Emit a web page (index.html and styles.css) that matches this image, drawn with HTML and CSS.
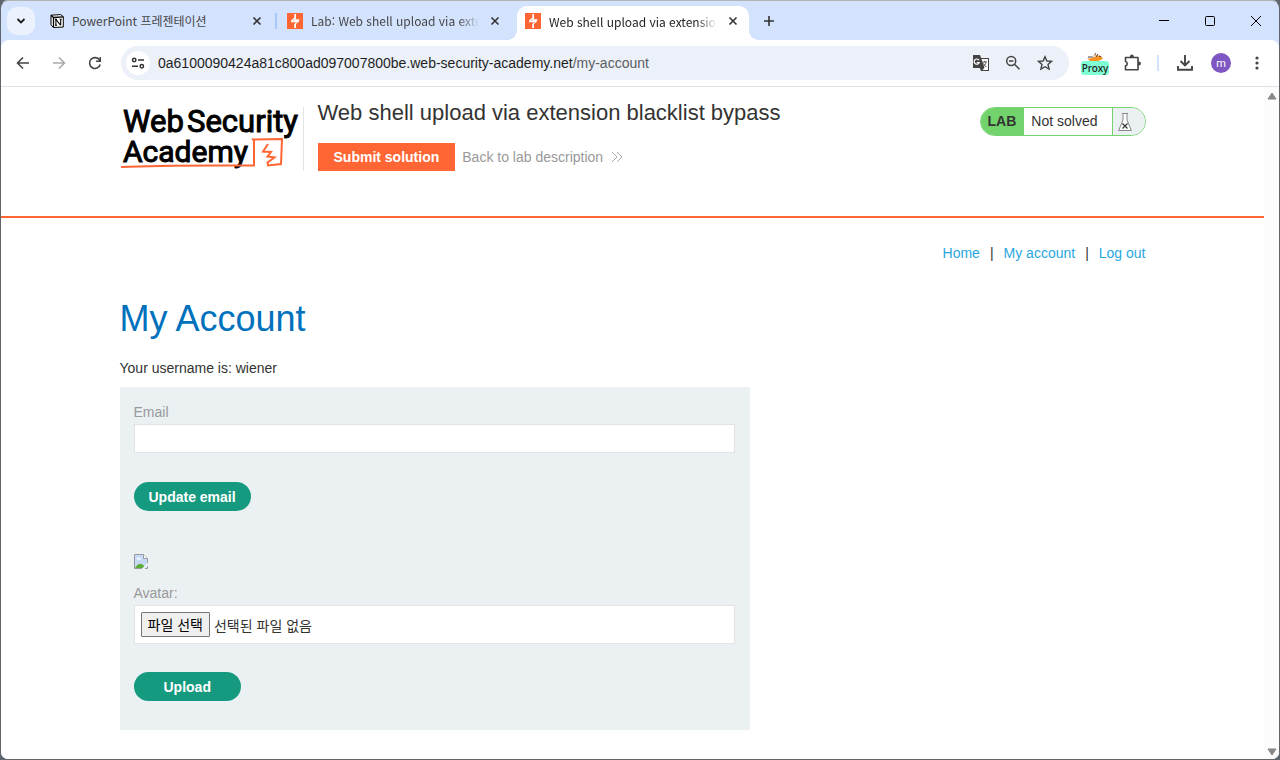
FILE: index.html
```html
<!DOCTYPE html>
<html lang="ko">
<head>
    <meta charset="UTF-8">
    <meta name="viewport" content="width=device-width, initial-scale=1.0">
    <title>Web shell upload via extension blacklist bypass</title>
    <link rel="stylesheet" href="styles.css">
</head>
<body>
    <svg width="0" height="0" class="defs" aria-hidden="true">
        <symbol id="burp" viewBox="0 0 16 16">
            <path fill="#ff6633" d="M0 0h16v16H0z"/>
            <path fill="#fff" d="M9 1v5.200h3.500L11.500 9 9 11v4H7.200v-3.800L9 9.200H3.800L4.500 7 7.300 4.500V1z"/>
            <path fill="#ff6633" d="M6.500 6.500h1.500L6.500 8zM9 9.300h1L9 10.300z"/>
        </symbol>
        <symbol id="close" viewBox="0 0 10 10">
            <path d="M1.500 1.500l7 7M8.500 1.500l-7 7" fill="none" stroke="currentColor" stroke-width="1.600"/>
        </symbol>
    </svg>

    <div class="window">
        <!-- Tabs -->
        <div class="tab-strip">
            <button class="tab-search" aria-label="Search tabs">
                <svg width="10" height="10" viewBox="0 0 10 10"><path d="M1.500 3 5 6.500 8.500 3" fill="none" stroke="#1f1f1f" stroke-width="1.800"/></svg>
            </button>
            <div class="tab first">
                <svg width="14" height="14" viewBox="0 0 14 14">
                    <path d="M1 1.200 10.500.600 13.300 2.600V13L3.500 13.500 1 10.800z" fill="#fff" stroke="#000"/>
                    <path d="M1 1.200 3.500 3.500 13.300 2.900M3.500 3.500v10" fill="none" stroke="#000" stroke-width="1.300"/>
                    <path d="M5 5.400h2M5.900 5.400v6M5 11.300h2M6 5.500l4.500 5.700M10.700 5.300v6M9.700 5.200h2" fill="none" stroke="#000" stroke-width="1.100"/>
                </svg>
                <span class="tab-title">PowerPoint 프레젠테이션</span>
                <button class="tab-close" aria-label="Close tab"><svg width="10" height="10"><use href="#close"/></svg></button>
            </div>
            <div class="tab-divider"></div>
            <div class="tab second">
                <svg width="16" height="16"><use href="#burp"/></svg>
                <span class="tab-title fade">Lab: Web shell upload via extension</span>
                <button class="tab-close" aria-label="Close tab"><svg width="10" height="10"><use href="#close"/></svg></button>
            </div>
            <div class="tab active">
                <svg width="16" height="16"><use href="#burp"/></svg>
                <span class="tab-title fade">Web shell upload via extension</span>
                <button class="tab-close" aria-label="Close tab"><svg width="10" height="10"><use href="#close"/></svg></button>
            </div>
            <button class="new-tab" aria-label="New tab">
                <svg width="12" height="12" viewBox="0 0 12 12"><path d="M6 1v10M1 6h10" stroke="#333" stroke-width="1.600"/></svg>
            </button>
            <div class="window-controls">
                <button aria-label="Minimize"><svg width="12" height="12" viewBox="0 0 12 12"><path d="M1 5.500h10" stroke="#000"/></svg></button>
                <button aria-label="Maximize"><svg width="12" height="12" viewBox="0 0 12 12"><rect x="1.500" y="1.500" width="9" height="9" rx="1" fill="none" stroke="#000"/></svg></button>
                <button aria-label="Close"><svg width="12" height="12" viewBox="0 0 12 12"><path d="M1 1l10 10M11 1 1 11" stroke="#000"/></svg></button>
            </div>
        </div>

        <!-- Toolbar -->
        <div class="toolbar">
            <button class="nav-button" aria-label="Back">
                <svg width="14" height="14" viewBox="0 0 14 14"><path d="M13 7H2M7 1.500 1.500 7 7 12.500" fill="none" stroke="#444" stroke-width="1.600"/></svg>
            </button>
            <button class="nav-button" aria-label="Forward">
                <svg width="14" height="14" viewBox="0 0 14 14"><path d="M1 7h11M7 1.500 12.500 7 7 12.500" fill="none" stroke="#aaa" stroke-width="1.600"/></svg>
            </button>
            <button class="nav-button" aria-label="Reload">
                <svg width="14" height="14" viewBox="0 0 14 14"><path d="M12.200 8.500A5.400 5.400 0 1 1 11.500 4L12.500 5.500" fill="none" stroke="#444" stroke-width="1.600"/><path d="M13 1v5H8V4.500h3.500V1z" fill="#444"/></svg>
            </button>
            <div class="address-bar">
                <button class="site-info" aria-label="Site information">
                    <svg width="14" height="14" viewBox="0 0 14 14" fill="none" stroke="#333" stroke-width="1.500"><circle cx="3.200" cy="4" r="1.700"/><path d="M7 4h6M1 10.200h6"/><circle cx="10.800" cy="10.200" r="1.700"/></svg>
                </button>
                <span class="url">0a6100090424a81c800ad097007800be.web-security-academy.net<span class="path">/my-account</span></span>
                <button aria-label="Translate">
                    <svg width="18" height="18" viewBox="0 0 18 18">
                        <path d="M1 1h7l1.200 3H17v13H9l-1.200-3H1z" fill="#444"/>
                        <path d="M9.500 5H16v11h-5.500l2-2.300z" fill="#fff"/>
                        <path d="M7 6.300A2.600 2.600 0 1 0 7.200 8.500H4.800" fill="none" stroke="#fff" stroke-width="1.200"/>
                        <path d="M10.500 8H15M12.700 6.800V8M14 8.200c-.500 2-1.500 3.300-2.500 4.200M11.500 9.500c.700 1.500 1.500 2.300 2.700 3.500" fill="none" stroke="#555"/>
                    </svg>
                </button>
                <button aria-label="Zoom">
                    <svg width="16" height="16" viewBox="0 0 16 16" fill="none" stroke="#444" stroke-width="1.500"><circle cx="6.200" cy="6" r="4.500"/><path d="M9.500 9.300l5 5M4 6h4.400"/></svg>
                </button>
                <button aria-label="Bookmark">
                    <svg width="16" height="16" viewBox="0 0 16 16"><path d="M8 1.700l1.900 4.300 4.700.400-3.600 3.100 1.100 4.600L8 11.700l-4.100 2.400L5 9.500 1.400 6.400l4.700-.400z" fill="none" stroke="#444" stroke-width="1.400"/></svg>
                </button>
            </div>
            <button class="proxy" aria-label="Proxy">
                <svg width="16" height="9" viewBox="0 0 16 9">
                    <path d="M0 6Q5 8 8 3l6 1 2 3-5 2H3z" fill="#f7931e"/>
                    <path d="M1 5l5 0 3-4M9 5l2-3M12 4l2 1" stroke="#444" fill="none"/>
                    <path d="M5 5l2-3 2 3z" fill="#ddd"/>
                </svg>
                <span class="proxy-badge">Proxy</span>
            </button>
            <button class="extensions" aria-label="Extensions">
                <svg width="18" height="18" viewBox="0 0 18 18"><path d="M1.500 3.500H14v12.300H1.500v-4a2.200 2.200 0 0 0 0-4.300z" fill="none" stroke="#444" stroke-width="1.600" stroke-linejoin="round"/><path d="M6 3.500V2.500a1.900 1.900 0 0 1 3.800 0v1zM14 7.600h1a1.900 1.900 0 0 1 0 3.800h-1z" fill="#444"/></svg>
            </button>
            <div class="toolbar-divider"></div>
            <button class="downloads" aria-label="Downloads">
                <svg width="18" height="18" viewBox="0 0 18 18"><path d="M9 1v10M4.500 7 9 11.500 13.500 7M2 12v3.800h14V12" fill="none" stroke="#444" stroke-width="1.900"/></svg>
            </button>
            <button class="profile" aria-label="Profile">m</button>
            <button class="menu" aria-label="Menu">
                <svg width="4" height="14" viewBox="0 0 4 14" fill="#444"><circle cx="2" cy="2" r="1.600"/><circle cx="2" cy="7" r="1.600"/><circle cx="2" cy="12" r="1.600"/></svg>
            </button>
        </div>

        <!-- Page -->
        <div class="viewport">
            <div class="page">
                <header class="lab-header">
                    <div class="container">
                        <div class="logo">
                            <svg width="182" height="64" viewBox="0 0 182 64" role="img" aria-label="Web Security Academy">
                                <g class="logo-text">
                                    <text x="3" y="25">Web</text>
                                    <text x="67" y="25">Security</text>
                                    <text class="logo-academy" x="3" y="55">Academy</text>
                                </g>
                                <path d="M1 60Q40 58 134 58.500L134 34 133 32.500 162 32 161 57 148 58.500 147.500 55.500 154.500 50.500 147.500 49.500 151 45 143 44.500 148 37" fill="none" stroke="#ff6633" stroke-width="2"/>
                            </svg>
                        </div>
                        <div class="lab-title">
                            <h2>Web shell upload via extension blacklist bypass</h2>
                            <div class="lab-actions">
                                <button class="submit-solution">Submit solution</button>
                                <a class="back-link" href="#">Back to lab description
                                    <svg width="12" height="12" viewBox="0 0 12 12"><path d="M1 1l5 5-5 5M6 1l5 5-5 5" fill="none" stroke="#aaa"/></svg>
                                </a>
                            </div>
                        </div>
                        <div class="lab-status">
                            <span class="lab-label">LAB</span>
                            <span class="lab-state">Not solved</span>
                            <span class="lab-flask">
                                <svg width="14" height="18" viewBox="0 0 14 18"><path d="M4 .500h6M5 1v6L.600 17.500h12.800L9 7V1" fill="#fff" stroke="#888"/><path d="M4.500 10.500l5 5M9.500 10.500l-5 5" stroke="#333" stroke-width="1.200"/></svg>
                            </span>
                        </div>
                    </div>
                </header>

                <main class="content">
                    <nav class="account-links">
                        <a href="#">Home</a><span>|</span><a href="#">My account</a><span>|</span><a href="#">Log out</a>
                    </nav>
                    <h1>My Account</h1>
                    <p class="username">Your username is: wiener</p>
                    <div class="forms">
                        <form>
                            <label for="email">Email</label>
                            <input class="email" type="email" id="email">
                            <button class="green-button" type="button">Update email</button>
                        </form>
                        <form class="avatar-form">
                            <svg class="broken-image" width="14" height="15" viewBox="0 0 14 15" role="img" aria-label="avatar">
                                <path d="M.500.500h9l4 4v10H.500z" fill="#c6d9f7" stroke="#999"/>
                                <path d="M9.500.500v4h4" fill="#fff" stroke="#999"/>
                                <path d="M2.500 5.500q1-3 3-1.500 2 0 1.500 1.500z" fill="#fff"/>
                                <path d="M1 14q5-8 10-1v1z" fill="#5aad37"/>
                                <path d="M14 8.500 7.500 15h3l3.500-3.500z" fill="#ebf0f3"/>
                            </svg>
                            <label for="avatar">Avatar:</label>
                            <div class="file-box">
                                <span class="file-button">파일 선택</span>
                                <span class="file-name">선택된 파일 없음</span>
                                <input type="file" id="avatar">
                            </div>
                            <button class="green-button upload" type="button">Upload</button>
                        </form>
                    </div>
                </main>
            </div>
            <div class="scrollbar">
                <svg width="10" height="8" viewBox="0 0 10 8"><path d="M5 1 9 7H1z" fill="#888" stroke="#888" stroke-linejoin="round"/></svg>
                <svg width="10" height="8" viewBox="0 0 10 8"><path d="M5 7 1 1h8z" fill="#888" stroke="#888" stroke-linejoin="round"/></svg>
            </div>
        </div>
    </div>
</body>
</html>
```
FILE: styles.css
```css
* {
    box-sizing: border-box;
}
body {
    margin: 0;
    background-color: #5f666c;
    font-family: "Liberation Sans", "Noto Sans CJK KR", sans-serif;
    font-size: 14px;
    color: #333332;
}
button {
    display: flex;
    align-items: center;
    justify-content: center;
    flex-shrink: 0;
    padding: 0;
    border: none;
    background: none;
    cursor: pointer;
}
svg {
    display: block;
    flex-shrink: 0;
}
a {
    text-decoration: none;
}
.defs {
    position: absolute;
}
.window {
    display: flex;
    flex-direction: column;
    min-height: 100vh;
    border: 1px solid #5f666c;
    border-top-color: #b4b4b4;
    border-radius: 8px;
    background-color: #d3e2fd;
    overflow: hidden;
}

/* Tabs */
.tab-strip {
    display: flex;
    align-items: center;
    height: 39px;
    padding-left: 6px;
    font-family: "Noto Sans CJK KR", sans-serif;
    font-size: 12px;
    color: #474747;
}
.tab-search {
    width: 28px;
    height: 28px;
    border-radius: 10px;
    background-color: #ebf2fe;
}
.tab {
    display: flex;
    align-items: center;
    gap: 8px;
    height: 34px;
    padding: 0 8px;
}
.tab.first {
    width: 240px;
    padding: 0 10px 0 15px;
}
.tab.second {
    width: 240px;
    padding: 0 14px 0 10px;
}
.tab.active {
    position: relative;
    align-self: flex-end;
    width: 232px;
    padding-bottom: 4px;
    border-radius: 10px 10px 0 0;
    background-color: #fff;
    color: #1f1f1f;
}
.tab.active::before,
.tab.active::after {
    content: "";
    position: absolute;
    bottom: 0;
    width: 10px;
    height: 10px;
}
.tab.active::before {
    right: 100%;
    background: radial-gradient(circle at 0 0, transparent 10px, #fff 10px);
}
.tab.active::after {
    left: 100%;
    background: radial-gradient(circle at 100% 0, transparent 10px, #fff 10px);
}
.tab-title {
    flex: 1;
    overflow: hidden;
    white-space: nowrap;
}
.tab-title.fade {
    -webkit-mask-image: linear-gradient(to right, #000 88%, transparent);
    mask-image: linear-gradient(to right, #000 88%, transparent);
}
.tab-close {
    width: 16px;
    height: 16px;
    color: #333;
}
.tab-divider {
    width: 2px;
    height: 16px;
    background-color: #a8c7fa;
}
.new-tab {
    width: 40px;
    height: 28px;
}
.window-controls {
    display: flex;
    margin-left: auto;
}
.window-controls button {
    width: 46px;
    height: 38px;
}

/* Toolbar */
.toolbar {
    display: flex;
    align-items: center;
    height: 47px;
    padding: 0 12px 0 4px;
    border-bottom: 1px solid #dfe1e5;
    border-radius: 8px 8px 0 0;
    background-color: #fff;
}
.nav-button {
    width: 36px;
    height: 34px;
}
.address-bar {
    display: flex;
    flex: 1;
    align-items: center;
    min-width: 0;
    height: 34px;
    margin-left: 8px;
    padding: 0 8px 0 5px;
    border-radius: 17px;
    background-color: #ebf0f9;
}
.address-bar button {
    width: 32px;
    height: 32px;
}
.address-bar .site-info {
    width: 24px;
    height: 24px;
    border-radius: 12px;
    background-color: #fff;
}
.url {
    flex: 1;
    overflow: hidden;
    padding-left: 8px;
    white-space: nowrap;
    color: #1f1f1f;
}
.path {
    color: #5a5d61;
}
.proxy {
    flex-direction: column;
    width: 28px;
    margin-left: 12px;
}
.proxy-badge {
    width: 28px;
    height: 14px;
    overflow: hidden;
    border-radius: 3px;
    background-color: #7fffd4;
    font-family: "Noto Sans", sans-serif;
    font-size: 10px;
    font-weight: 500;
    line-height: 14px;
    color: #202020;
}
.extensions {
    width: 48px;
    height: 32px;
}
.toolbar-divider {
    width: 2px;
    height: 16px;
    background-color: #d3e2fd;
}
.downloads {
    width: 52px;
    height: 32px;
}
.profile {
    width: 20px;
    height: 20px;
    border-radius: 10px;
    background-color: #7e57c2;
    font-family: Roboto, sans-serif;
    font-size: 11px;
    color: #fff;
}
.menu {
    width: 20px;
    height: 32px;
    margin-left: 16px;
}

/* Page */
.viewport {
    display: flex;
    flex: 1;
    background-color: #fff;
}
.page {
    flex: 1;
    min-width: 0;
}
.scrollbar {
    display: flex;
    flex-direction: column;
    align-items: center;
    justify-content: space-between;
    width: 15px;
    padding: 5px 0 3px;
    background-color: #fcfcfc;
}
.lab-header {
    height: 131px;
    padding-top: 20px;
    border-bottom: 2px solid #ff6633;
}
.container,
.content {
    display: flex;
    max-width: 1026px;
    margin: 0 auto;
}
.logo {
    align-self: flex-start;
    padding-right: 1px;
    border-right: 1px solid #e3e3e3;
}
.logo-text {
    font-family: Roboto, sans-serif;
    font-size: 31px;
    stroke: #000;
    stroke-width: 1;
}
.logo-academy {
    font-size: 30px;
}
.lab-title {
    flex: 1;
    padding-left: 14px;
}
.lab-title h2 {
    margin: -8px 0 17px;
    font-size: 22px;
    font-weight: normal;
    line-height: 27px;
}
.lab-actions {
    display: flex;
    align-items: center;
    gap: 7px;
}
.submit-solution {
    height: 28px;
    padding: 0 16px;
    background-color: #ff6633;
    font-family: inherit;
    font-size: 14px;
    font-weight: bold;
    color: #fff;
}
.back-link {
    display: flex;
    align-items: center;
    gap: 8px;
    color: #999;
}
.lab-status {
    display: flex;
    align-self: flex-start;
    height: 29px;
    border: 1px solid #72d26c;
    border-radius: 15px;
    overflow: hidden;
    line-height: 27px;
}
.lab-label {
    padding: 0 8px 0 7px;
    background-color: #72d26c;
    font-weight: bold;
}
.lab-state {
    padding: 0 14px 0 7px;
}
.lab-flask {
    display: flex;
    align-items: center;
    width: 33px;
    padding-left: 5px;
    border-left: 1px solid #72d26c;
    background-color: #ebf0f3;
}
.content {
    flex-direction: column;
    padding-top: 27px;
}
.account-links {
    display: flex;
    justify-content: flex-end;
    gap: 10px;
    line-height: 16px;
}
.account-links a {
    color: #29a7de;
}
h1 {
    margin: 37px 0 20px;
    font-size: 36px;
    font-weight: normal;
    line-height: 42px;
    color: #0071bc;
}
.username {
    margin: 0 0 11px;
    line-height: 16px;
}
.forms {
    width: 630px;
    max-width: 100%;
    padding: 14px 15px 29px 14px;
    background-color: #ebf0f3;
}
.forms label {
    display: block;
    line-height: 23px;
    color: #999;
}
.email {
    display: block;
    width: 100%;
    height: 29px;
    padding: 0 6px;
    border: 1px solid #e3e3e3;
    background-color: #fff;
    font-family: inherit;
    font-size: 14px;
}
.green-button {
    height: 29px;
    margin-top: 29px;
    padding: 0 15px;
    border-radius: 15px;
    background-color: #159a80;
    font-family: inherit;
    font-size: 14px;
    font-weight: bold;
    color: #fff;
}
.upload {
    margin-top: 28px;
    padding: 0 30px;
}
.avatar-form {
    padding-top: 43px;
}
.broken-image {
    margin-bottom: 13px;
}
.file-box {
    display: flex;
    position: relative;
    align-items: center;
    gap: 4px;
    height: 39px;
    padding: 0 6px;
    border: 1px solid #e3e3e3;
    background-color: #fff;
    font-family: "Noto Sans CJK KR", sans-serif;
}
.file-button {
    padding: 0 6px;
    border: 1px solid #767676;
    border-radius: 1px;
    background-color: #efefef;
    line-height: 23px;
    color: #000;
}
/* the native control lies over the translated labels */
.file-box input {
    position: absolute;
    inset: 0;
    width: 100%;
    opacity: 0;
    cursor: pointer;
}
```
